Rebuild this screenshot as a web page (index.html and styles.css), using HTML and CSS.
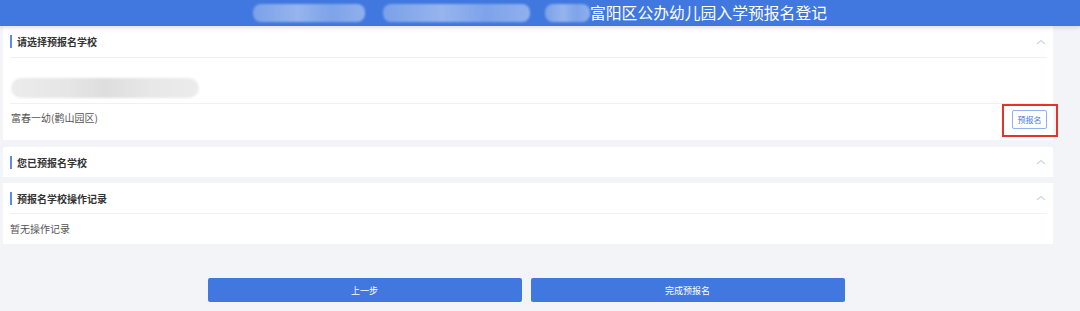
FILE: index.html
```html
<!DOCTYPE html>
<html>
    <head>
        <meta charset="UTF-8">
        <meta name="viewport" content="width=device-width, initial-scale=1.0">
        <title>富阳区公办幼儿园入学预报名登记</title>
        <link rel="stylesheet" href="styles.css">
    </head>
    <body>
        <div class="topbar">
            <div class="topbar-inner">
                <span class="mask mask-a"></span>
                <span class="mask mask-b"></span>
                <span class="mask mask-c"></span>
                <span class="topbar-title">富阳区公办幼儿园入学预报名登记</span>
            </div>
        </div>

        <div class="main">
            <div class="panel first">
                <div class="panel-head">
                    <span class="panel-title">请选择预报名学校</span>
                    <svg class="caret" width="10" height="6" viewBox="0 0 10 6"><polyline points="1,5 5,1.5 9,5" fill="none" stroke="#d4d6dc" stroke-width="1.2"/></svg>
                </div>
                <div class="filter-row">
                    <span class="mask-grey"></span>
                </div>
                <div class="school-row">
                    <span class="school-name">富春一幼(鹳山园区)</span>
                    <button class="apply-btn">预报名</button>
                    <span class="mark"></span>
                </div>
            </div>

            <div class="panel">
                <div class="panel-head no-line">
                    <span class="panel-title">您已预报名学校</span>
                    <svg class="caret" width="10" height="6" viewBox="0 0 10 6"><polyline points="1,5 5,1.5 9,5" fill="none" stroke="#d4d6dc" stroke-width="1.2"/></svg>
                </div>
            </div>

            <div class="panel">
                <div class="panel-head">
                    <span class="panel-title">预报名学校操作记录</span>
                    <svg class="caret" width="10" height="6" viewBox="0 0 10 6"><polyline points="1,5 5,1.5 9,5" fill="none" stroke="#d4d6dc" stroke-width="1.2"/></svg>
                </div>
                <div class="empty">暂无操作记录</div>
            </div>

            <div class="actions">
                <button class="big-btn">上一步</button>
                <button class="big-btn">完成预报名</button>
            </div>
        </div>
    </body>
</html>
```

FILE: styles.css
```css
body {
    margin: 0;
    padding: 0;
    background: #f3f4f8;
    font-family: "Noto Sans CJK SC", "Noto Sans", sans-serif;
    color: #333333;
}

.topbar {
    height: 26px;
    background: #4178e0;
    box-shadow: 0 2px 4px rgba(0, 0, 0, 0.12);
    display: flex;
    justify-content: center;
    align-items: center;
    position: relative;
    z-index: 1;
}

.topbar-inner {
    display: flex;
    align-items: center;
}

.mask {
    display: inline-block;
    height: 18px;
    border-radius: 8px;
    background: linear-gradient(90deg, rgba(255,255,255,0.3), rgba(255,255,255,0.45) 40%, rgba(255,255,255,0.32) 70%, rgba(255,255,255,0.42));
    filter: blur(1.2px);
}

.mask-a {
    width: 112px;
    margin-right: 18px;
}

.mask-b {
    width: 147px;
    margin-right: 15px;
}

.mask-c {
    width: 45px;
    margin-right: 0;
}

.topbar-title {
    color: #ffffff;
    font-size: 15.8px;
    line-height: 26px;
}

.main {
    padding: 0 27px 0 3px;
}

.panel {
    background: #ffffff;
    padding: 0 6px 0 7px;
    margin-bottom: 6px;
}

.panel.first {
    margin-bottom: 7px;
}

.panel-head {
    height: 30px;
    border-bottom: 1px solid #f0f1f4;
    display: flex;
    align-items: center;
    justify-content: space-between;
}

.panel.first .panel-head {
    height: 31px;
}

.panel-head.no-line {
    border-bottom: none;
}

.panel-title {
    font-size: 10px;
    font-weight: bold;
    color: #333333;
    border-left: 2px solid #5a8cf0;
    padding-left: 5px;
    line-height: 13px;
}

.caret {
    margin-right: 1px;
}

.filter-row {
    height: 46px;
    border-bottom: 1px solid #f0f1f4;
    padding-top: 20px;
    box-sizing: border-box;
}

.mask-grey {
    display: block;
    width: 188px;
    height: 20px;
    margin-left: 1px;
    border-radius: 10px;
    background: linear-gradient(90deg, #ececec, #e6e6e6 30%, #dedede 50%, #e8e8e8 75%, #ececec);
    filter: blur(1px);
}

.school-row {
    height: 36px;
    display: flex;
    justify-content: space-between;
    align-items: flex-start;
    padding-top: 6px;
    box-sizing: border-box;
    position: relative;
}

.school-name {
    font-size: 10px;
    color: #555555;
    line-height: 16px;
    margin-left: 1px;
}

.apply-btn {
    width: 35px;
    height: 19px;
    border: 1px solid #93b1ee;
    border-radius: 2px;
    background: #ffffff;
    color: #4a78e0;
    font-family: "Noto Sans CJK SC", sans-serif;
    font-size: 8px;
    padding: 0;
}

.mark {
    position: absolute;
    top: 0;
    right: -11px;
    width: 52px;
    height: 29px;
    border: 2px solid #e5332a;
}

.empty {
    height: 30px;
    line-height: 30px;
    font-size: 10px;
    color: #555555;
}

.actions {
    display: flex;
    justify-content: center;
    gap: 9px;
    margin-top: 34px;
    padding-right: 4px;
}

.big-btn {
    width: 314px;
    height: 24px;
    border: none;
    border-radius: 2px;
    background: #4178e0;
    color: #ffffff;
    font-family: "Noto Sans CJK SC", sans-serif;
    font-size: 9px;
    padding: 0;
}
```
